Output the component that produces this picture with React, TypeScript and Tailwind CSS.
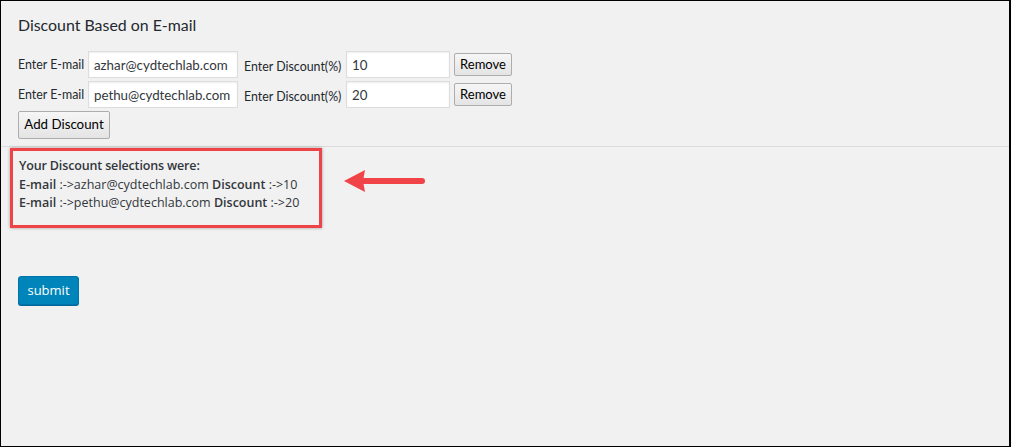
import React from 'react'

const rows = [
  { email: 'azhar@cydtechlab.com', discount: '10' },
  { email: 'pethu@cydtechlab.com', discount: '20' },
]

const btn =
  'border border-[#adadad] rounded-[2px] bg-gradient-to-b from-[#f6f6f6] to-[#e4e4e4] text-black leading-none'

const field =
  'h-[27px] bg-white border border-[#ddd] shadow-[inset_0_1px_2px_rgba(0,0,0,0.07)] px-[5px] text-[13.3px] text-[#32373c] outline-none'

export default function App() {
  return (
    <div className="w-[1011px] h-[447px] overflow-hidden bg-[#f1f1f1] border border-black border-r-2 font-['Lato',sans-serif] text-[#23282d]">
      <div className="px-[17px] pt-[12px] pb-[7px]">
        <h2 className="text-[15.9px] leading-[24px] font-normal text-[#23282d]">Discount Based on E-mail</h2>
        <div className="mt-[14px] flex flex-col gap-[3px]">
          {rows.map((r) => (
            <div key={r.email} className="flex items-center h-[27px] text-[12.4px]">
              <span className="w-[70px] mt-[2px] whitespace-nowrap">Enter E-mail</span>
              <input readOnly value={r.email} className={`${field} w-[150px]`} />
              <span className="ml-[6px] w-[102px] mt-[6px] whitespace-nowrap">Enter Discount(%)</span>
              <input readOnly value={r.discount} className={`${field} w-[104px]`} />
              <button className={`${btn} ml-[4px] w-[58px] h-[23px] text-[13px]`}>Remove</button>
            </div>
          ))}
          <div>
            <button className={`${btn} w-[92px] h-[28px] text-[13.3px]`}>Add Discount</button>
          </div>
        </div>
      </div>
      <div className="border-t border-[#dcdcdc]" />
      <div className="flex items-center pl-[9px] pt-[1px] font-['Open_Sans',sans-serif]">
        <div className="w-[312px] h-[80px] border-[3px] border-[#ef4447] shadow-[0_0_3px_rgba(0,0,0,0.35)] px-[6px] pt-[6px] text-[12.5px] leading-[18.5px] text-[#32373c]">
          <div className="font-semibold tracking-[-0.15px]">Your Discount selections were:</div>
          <div>
            <span className="font-semibold">E-mail</span> :-&gt;azhar@cydtechlab.com{' '}
            <span className="font-semibold">Discount</span> :-&gt;10
          </div>
          <div>
            <span className="font-semibold">E-mail</span> :-&gt;pethu@cydtechlab.com{' '}
            <span className="font-semibold">Discount</span> :-&gt;20
          </div>
        </div>
        <svg width="84" height="26" viewBox="0 0 84 26" className="ml-[21px] -mt-[14px]">
          <path d="M18 13 H79" stroke="#f04449" strokeWidth="6" strokeLinecap="round" />
          <path d="M1 13 L22 2 L20 13 L22 24 Z" fill="#f04449" />
        </svg>
      </div>
      <div className="px-[17px] pt-[48px] font-['Open_Sans',sans-serif]">
        <button className="w-[61px] h-[29px] rounded-[3px] bg-[#0085ba] border border-[#0073aa] shadow-[0_1px_0_#006799] text-white text-[13px] leading-none">
          submit
        </button>
      </div>
    </div>
  )
}
